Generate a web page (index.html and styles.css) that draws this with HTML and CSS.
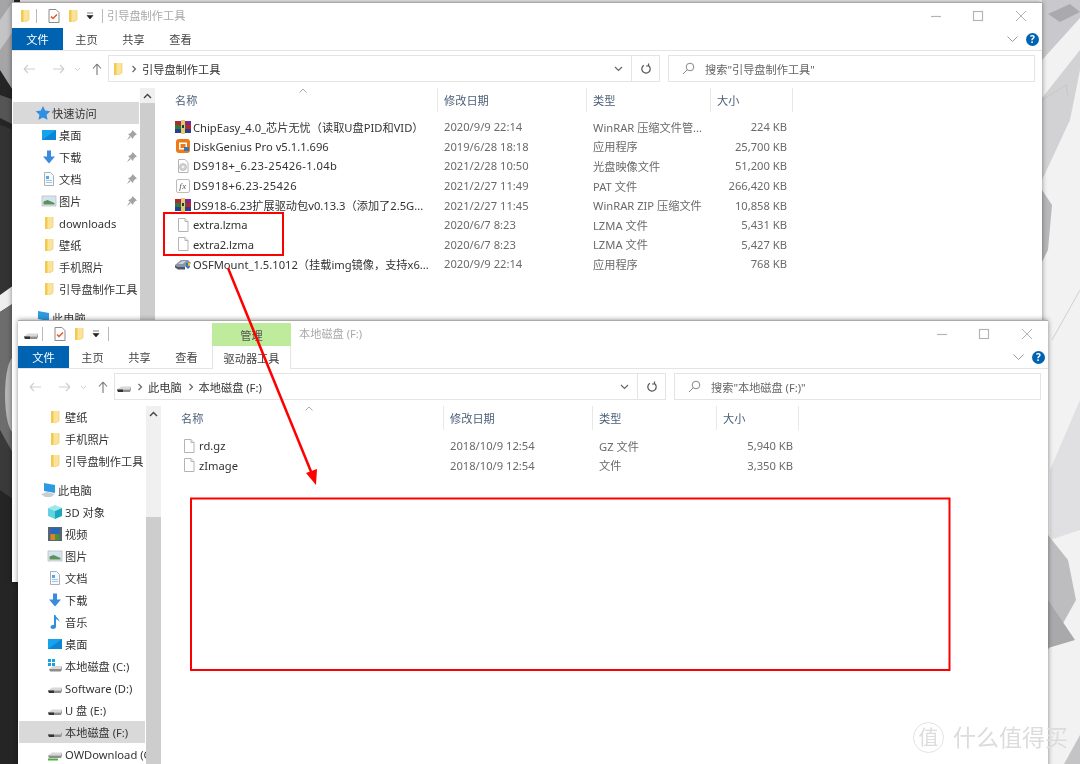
FILE: index.html
```html
<!DOCTYPE html>
<html lang="zh-CN">
<head>
<meta charset="UTF-8">
<meta name="viewport" content="width=device-width, initial-scale=1.0">
<link rel="stylesheet" href="styles.css">
<title>引导盘制作工具</title>
</head>
<body>

<!-- shared icons -->
<svg class="symbols" aria-hidden="true">
  <symbol id="i-folder" viewBox="0 0 16 16"><path d="M4 2h8v10l-4 2H4z" fill="#fbe49a"/><path d="M4 2h2.500v12H4z" fill="#f3c94f"/><path d="M12 2v10l-4 2" fill="none" stroke="#eccb6c" stroke-width=".7"/></symbol>
  <symbol id="i-file" viewBox="0 0 16 16"><path d="M3.500 1.500h6.500l3 3v10h-9.500z" fill="#fff" stroke="#b4b4b4"/><path d="M10 1.500v3h3" fill="#eee" stroke="#b4b4b4"/></symbol>
  <symbol id="i-check" viewBox="0 0 16 16"><path d="M3 1.500h7l3 3v10h-10z" fill="#fdfdfd" stroke="#8c8c8c"/><path d="M5 8.500l2 2 4-4" fill="none" stroke="#e2571e" stroke-width="1.400"/></symbol>
  <symbol id="i-rar" viewBox="0 0 16 16"><rect x="0" y="2" width="16" height="4" fill="#7d2a8c"/><rect x="0" y="6" width="16" height="4" fill="#2d7a3a"/><rect x="0" y="10" width="16" height="4" fill="#27408f"/><rect x="0" y="2" width="5" height="4" fill="#b3272d"/><rect x="11" y="6" width="5" height="4" fill="#b3272d"/><rect x="6" y="1" width="4" height="14" fill="#e8c86a"/><rect x="7" y="6" width="2" height="3" fill="#333"/></symbol>
  <symbol id="i-dg" viewBox="0 0 16 16"><rect x="1" y="1" width="14" height="14" rx="3" fill="#ee7a16"/><path d="M4 4.500h8v7H4z" fill="#fff"/><path d="M5.500 6h5v4h-5z" fill="#ee7a16"/><rect x="9" y="9" width="5" height="4" fill="#2a78c8"/></symbol>
  <symbol id="i-disc" viewBox="0 0 16 16"><path d="M3.500 1.500h6.500l3 3v10h-9.500z" fill="#fff" stroke="#b4b4b4"/><circle cx="8" cy="9" r="3.500" fill="#d4d4d4" stroke="#aaa" stroke-width=".6"/><circle cx="8" cy="9" r="1" fill="#fff"/></symbol>
  <symbol id="i-fx" viewBox="0 0 16 16"><rect x="1.500" y="1.500" width="13" height="13" rx="1.500" fill="#fff" stroke="#bcbcbc"/><text x="8" y="11" text-anchor="middle" class="icon-fx">fx</text></symbol>
  <symbol id="i-osf" viewBox="0 0 16 16"><path d="M0 9l6-5h7l3 3-6 4H3z" fill="#8a96a6"/><path d="M0 9l3 2h7v2.500H3l-3-2z" fill="#4c5666"/><path d="M3 8l4-3h4L8 8z" fill="#c8d0da"/><path d="M11 7h4v4l-2 2-2-2z" fill="#2a78c8"/><path d="M13 7h2v3h-2z" fill="#f0c030"/></symbol>
  <symbol id="i-desktop" viewBox="0 0 16 16"><rect x="1" y="3" width="14" height="10" fill="#17a2ee"/><path d="M1 13l14-10v10z" fill="#0b86d6"/></symbol>
  <symbol id="i-down" viewBox="0 0 16 16"><path d="M6 1.500h4v6h4l-6 7-6-7h4z" fill="#3b8ade"/></symbol>
  <symbol id="i-doc" viewBox="0 0 16 16"><path d="M3.500 1.500h6l3 3v10h-9z" fill="#f6f9fc" stroke="#a9b2bb"/><rect x="5" y="5" width="3" height="3" fill="#57a9e0"/><path d="M5 9.500h6M5 11.500h6" stroke="#a9c4da"/></symbol>
  <symbol id="i-pic" viewBox="0 0 16 16"><rect x="1" y="3" width="14" height="10" fill="#e2e6ea" stroke="#a4abb2" stroke-width=".6"/><rect x="2.500" y="4.500" width="11" height="7" fill="#cfe3f2"/><path d="M2.500 11.500v-3l4-1.500 7 3v1.500z" fill="#5d9257"/></symbol>
  <symbol id="i-star" viewBox="0 0 16 16"><path d="M8 1l2.200 4.600 5 .7-3.600 3.500.9 5L8 12.400l-4.500 2.400.9-5L.8 6.300l5-.7z" fill="#2f8fe0"/></symbol>
  <symbol id="i-pc" viewBox="0 0 16 16"><path d="M3 1l11 2v8L3 9z" fill="#2d9be0"/><path d="M0 12l6-2 8 2-4 3H4z" fill="#c9ced3"/></symbol>
  <symbol id="i-cube" viewBox="0 0 16 16"><path d="M8 1l7 3-7 3-7-3z" fill="#9be8ee"/><path d="M1 4l7 3v8l-7-3z" fill="#62d3de"/><path d="M15 4l-7 3v8l7-3z" fill="#18a9bd"/></symbol>
  <symbol id="i-video" viewBox="0 0 16 16"><rect x="1" y="1" width="14" height="14" fill="#5a6472"/><rect x="3.500" y="2" width="9" height="6" fill="#2b66b8"/><rect x="3.500" y="8" width="4.500" height="6" fill="#d2882a"/><rect x="8" y="8" width="4.500" height="6" fill="#4d8f3a"/></symbol>
  <symbol id="i-music" viewBox="0 0 16 16"><path d="M7 1h1.500c.3 2.500 4 3.500 4 7-.7-1.500-2-2.500-3.500-2.800V12.500C9 14.300 7.500 15 6 15s-2.500-.8-2.500-2 1.300-2.200 3.500-2.200z" fill="#2f8fe0"/></symbol>
  <symbol id="i-drive" viewBox="0 0 16 16"><path d="M1 10.500l4-3h10l-1 3z" fill="#d8d8d8"/><path d="M1 10.500h13l1-3v3l-1 2.500H2z" fill="#8e8e8e"/><path d="M1 10.500h6v2.500H2z" fill="#333"/></symbol>
  <symbol id="i-drive-c" viewBox="0 0 16 16"><path d="M2 11l4-3h9l-1 3z" fill="#d8d8d8"/><path d="M2 11h12l1-3v3l-1 2.500H3z" fill="#8e8e8e"/><path d="M1 1h3v3H1zM5 1h3v3H5zM1 5h3v3H1zM5 5h3v3H5z" fill="#1ba1e2"/></symbol>
  <symbol id="i-drive-net" viewBox="0 0 16 16"><path d="M1 9.500l4-3h10l-1 3z" fill="#d8d8d8"/><path d="M1 9.500h13l1-3v3l-1 2.500H2z" fill="#8e8e8e"/><path d="M1 12.500h10v2H1z" fill="#4faf3d"/></symbol>
</svg>

<!-- desktop wallpaper -->
<svg class="wallpaper" viewBox="0 0 1080 764" aria-hidden="true">
  <rect width="1080" height="764" fill="#f2f2f2"/>
  <rect x="0" y="0" width="20" height="764" fill="#252525"/>
  <polygon points="0,0 14,0 14,92 0,70" fill="#a5a5a8"/>
  <polygon points="0,20 14,0 14,30 0,50" fill="#c4c4c6"/>
  <polygon points="0,95 14,100 14,125 0,118" fill="#555"/>
  <polygon points="0,125 14,130 14,285 0,295" fill="#333"/>
  <polygon points="0,295 14,285 14,303 0,312" fill="#eee"/>
  <polygon points="0,312 14,303 14,470 0,430" fill="#6d6d6d"/>
  <ellipse cx="14" cy="395" rx="9" ry="38" fill="#b5b5b5"/>
  <polygon points="0,430 14,455 14,500 0,490" fill="#3a3a3a"/>
  <polygon points="1042,0 1080,0 1080,18 1042,60" fill="#c9c9cd"/>
  <polygon points="1048,14 1070,4 1080,12 1060,22" fill="#aaaaae"/>
  <polygon points="1042,98 1080,50 1080,70 1070,120 1042,180" fill="#d2d2d5"/>
  <polygon points="1042,190 1052,205 1048,250 1042,262" fill="#b8b8bb"/>
  <polyline points="1042,100 1066,85 1068,96" fill="none" stroke="#c8c8c8"/>
  <polyline points="1052,340 1080,290" fill="none" stroke="#d0d0d0"/>
  <polygon points="1050,470 1080,400 1080,530 1050,540" fill="#e0e0e2"/>
  <polygon points="1048,535 1068,560 1076,600 1048,650" fill="#bdbdc0"/>
  <polygon points="1048,600 1075,640 1048,648" fill="#a9a9ac"/>
  <polygon points="1064,764 1080,735 1080,764" fill="#c4c4c6"/>
</svg>

<!-- back window -->
<section class="win win-back">
  <header class="titlebar">
    <div class="qat">
      <svg class="ico"><use href="#i-folder"/></svg>
      <span class="qat-sep"></span>
      <svg class="ico qat-check"><use href="#i-check"/></svg>
      <svg class="ico qat-folder"><use href="#i-folder"/></svg>
      <svg class="qat-arrow" viewBox="0 0 8 8"><path d="M1 1h6M1 3.500h6L4 7z" fill="#222" stroke="#222" stroke-width=".6"/></svg>
      <span class="qat-sep qat-sep-last"></span>
    </div>
    <span class="win-title">引导盘制作工具</span>
    <svg class="win-btns" viewBox="0 0 100 26"><path d="M0 13.500h10" stroke="#b5b5b5" stroke-width="1.200"/><rect x="42.500" y="8.500" width="9" height="9" fill="none" stroke="#b5b5b5" stroke-width="1.200"/><path d="M85 8l10 10M95 8L85 18" stroke="#b5b5b5"/></svg>
  </header>
  <nav class="tabs">
    <span class="tab tab-file">文件</span>
    <span class="tab">主页</span>
    <span class="tab">共享</span>
    <span class="tab">查看</span>
    <span class="ribbon-end">
      <svg class="ribbon-chev" viewBox="0 0 11 6"><path d="M.5.500l5 5 5-5" fill="none" stroke="#9a9a9a"/></svg>
      <span class="help">?</span>
    </span>
  </nav>
  <div class="addr-row">
    <svg class="nav-arrows" viewBox="0 0 96 27"><path d="M12 14h11M12 14l4-4M12 14l4 4M41 14h11M52 14l-4-4M52 14l-4 4" fill="none" stroke="#cfcfcf" stroke-width="1.200"/><path d="M63 13l2.500 2.500L68 13" fill="none" stroke="#cfcfcf"/><path d="M85 9v11M85 9l-4 4.500M85 9l4 4.500" fill="none" stroke="#777" stroke-width="1.100"/></svg>
    <div class="addr-box">
      <svg class="ico"><use href="#i-folder"/></svg>
      <svg class="crumb-sep" viewBox="0 0 6 8"><path d="M1.500 1l3 3-3 3" fill="none" stroke="#666" stroke-width="1.200"/></svg>
      <span class="crumb">引导盘制作工具</span>
      <svg class="addr-drop" viewBox="0 0 9 6"><path d="M1 1l3.500 3.500L8 1" fill="none" stroke="#666" stroke-width="1.200"/></svg>
      <span class="addr-refresh">
        <svg viewBox="0 0 12 12"><path d="M8.500 2.500A4.200 4.200 0 1 1 4 2.200M8.500 .5v2.500h-2.500" fill="none" stroke="#555" stroke-width="1.200"/></svg>
      </span>
    </div>
    <div class="search-box">
      <svg viewBox="0 0 13 13"><circle cx="8" cy="5" r="3.800" fill="none" stroke="#888"/><path d="M5.200 7.800L1 12" stroke="#888"/></svg>
      <span>搜索"引导盘制作工具"</span>
    </div>
  </div>
  <div class="win-body">
    <aside class="nav-pane">
      <ul class="nav-list nav-list-back">
        <li class="nav-top is-hover"><svg class="ico"><use href="#i-star"/></svg>快速访问</li>
        <li class="nav-item"><svg class="ico"><use href="#i-desktop"/></svg>桌面<svg class="pin" viewBox="0 0 10 10"><path d="M5.500 0L10 4.500 8.500 5 6.500 7 6 9 1 4 3 3.500 5 1.500zM2.500 6L0 10l3.500-2.500z" fill="#a3a3a3"/></svg></li>
        <li class="nav-item"><svg class="ico"><use href="#i-down"/></svg>下载<svg class="pin" viewBox="0 0 10 10"><path d="M5.500 0L10 4.500 8.500 5 6.500 7 6 9 1 4 3 3.500 5 1.500zM2.500 6L0 10l3.500-2.500z" fill="#a3a3a3"/></svg></li>
        <li class="nav-item"><svg class="ico"><use href="#i-doc"/></svg>文档<svg class="pin" viewBox="0 0 10 10"><path d="M5.500 0L10 4.500 8.500 5 6.500 7 6 9 1 4 3 3.500 5 1.500zM2.500 6L0 10l3.500-2.500z" fill="#a3a3a3"/></svg></li>
        <li class="nav-item"><svg class="ico"><use href="#i-pic"/></svg>图片<svg class="pin" viewBox="0 0 10 10"><path d="M5.500 0L10 4.500 8.500 5 6.500 7 6 9 1 4 3 3.500 5 1.500zM2.500 6L0 10l3.500-2.500z" fill="#a3a3a3"/></svg></li>
        <li class="nav-item"><svg class="ico"><use href="#i-folder"/></svg>downloads</li>
        <li class="nav-item"><svg class="ico"><use href="#i-folder"/></svg>壁纸</li>
        <li class="nav-item"><svg class="ico"><use href="#i-folder"/></svg>手机照片</li>
        <li class="nav-item"><svg class="ico"><use href="#i-folder"/></svg>引导盘制作工具</li>
        <li class="nav-top nav-group"><svg class="ico"><use href="#i-pc"/></svg>此电脑</li>
      </ul>
    </aside>
    <div class="scrollbar">
      <span class="sb-up"><svg viewBox="0 0 9 6"><path d="M1 5l3.500-3.500L8 5" fill="none" stroke="#444" stroke-width="1.400"/></svg></span>
      <span class="sb-thumb"></span>
    </div>
    <div class="file-list">
      <div class="file-head">
        <span class="col-name">名称<svg class="sort" viewBox="0 0 8 5"><path d="M.5 4.500L4 1l3.500 3.500" fill="none" stroke="#aaa"/></svg></span>
        <span>修改日期</span><span>类型</span><span>大小</span>
      </div>
      <div class="file-rows">
        <div class="file-row"><span class="col-name"><svg class="ico"><use href="#i-rar"/></svg>ChipEasy_4.0_芯片无忧（读取U盘PID和VID）</span><span>2020/9/9 22:14</span><span>WinRAR 压缩文件管...</span><span class="col-size">224 KB</span></div>
        <div class="file-row"><span class="col-name"><svg class="ico"><use href="#i-dg"/></svg>DiskGenius Pro v5.1.1.696</span><span>2019/6/28 18:18</span><span>应用程序</span><span class="col-size">25,700 KB</span></div>
        <div class="file-row"><span class="col-name name-wide"><svg class="ico"><use href="#i-disc"/></svg>DS918+_6.23-25426-1.04b</span><span>2021/2/28 10:50</span><span>光盘映像文件</span><span class="col-size">51,200 KB</span></div>
        <div class="file-row"><span class="col-name name-wide"><svg class="ico"><use href="#i-fx"/></svg>DS918+6.23-25426</span><span>2021/2/27 11:49</span><span>PAT 文件</span><span class="col-size">266,420 KB</span></div>
        <div class="file-row"><span class="col-name"><svg class="ico"><use href="#i-rar"/></svg>DS918-6.23扩展驱动包v0.13.3（添加了2.5G...</span><span>2021/2/27 11:45</span><span>WinRAR ZIP 压缩文件</span><span class="col-size">10,858 KB</span></div>
        <div class="file-row"><span class="col-name"><svg class="ico"><use href="#i-file"/></svg>extra.lzma</span><span>2020/6/7 8:23</span><span>LZMA 文件</span><span class="col-size">5,431 KB</span></div>
        <div class="file-row"><span class="col-name"><svg class="ico"><use href="#i-file"/></svg>extra2.lzma</span><span>2020/6/7 8:23</span><span>LZMA 文件</span><span class="col-size">5,427 KB</span></div>
        <div class="file-row"><span class="col-name"><svg class="ico"><use href="#i-osf"/></svg>OSFMount_1.5.1012（挂载img镜像，支持x6...</span><span>2020/9/9 22:14</span><span>应用程序</span><span class="col-size">768 KB</span></div>
      </div>
    </div>
  </div>
</section>

<!-- front window -->
<section class="win win-front">
  <header class="titlebar">
    <div class="qat">
      <svg class="ico"><use href="#i-drive"/></svg>
      <span class="qat-sep"></span>
      <svg class="ico qat-check"><use href="#i-check"/></svg>
      <svg class="ico qat-folder"><use href="#i-folder"/></svg>
      <svg class="qat-arrow" viewBox="0 0 8 8"><path d="M1 1h6M1 3.500h6L4 7z" fill="#222" stroke="#222" stroke-width=".6"/></svg>
      <span class="qat-sep qat-sep-last"></span>
    </div>
    <span class="ctx-head">管理</span>
    <span class="win-title win-title-ctx">本地磁盘 (F:)</span>
    <svg class="win-btns" viewBox="0 0 100 26"><path d="M0 13.500h10" stroke="#b5b5b5" stroke-width="1.200"/><rect x="42.500" y="8.500" width="9" height="9" fill="none" stroke="#b5b5b5" stroke-width="1.200"/><path d="M85 8l10 10M95 8L85 18" stroke="#b5b5b5"/></svg>
  </header>
  <nav class="tabs">
    <span class="tab tab-file">文件</span>
    <span class="tab">主页</span>
    <span class="tab">共享</span>
    <span class="tab">查看</span>
    <span class="tab tab-ctx">驱动器工具</span>
    <span class="ribbon-end">
      <svg class="ribbon-chev" viewBox="0 0 11 6"><path d="M.5.500l5 5 5-5" fill="none" stroke="#9a9a9a"/></svg>
      <span class="help">?</span>
    </span>
  </nav>
  <div class="addr-row">
    <svg class="nav-arrows" viewBox="0 0 96 27"><path d="M12 14h11M12 14l4-4M12 14l4 4M41 14h11M52 14l-4-4M52 14l-4 4" fill="none" stroke="#cfcfcf" stroke-width="1.200"/><path d="M63 13l2.500 2.500L68 13" fill="none" stroke="#cfcfcf"/><path d="M85 9v11M85 9l-4 4.500M85 9l4 4.500" fill="none" stroke="#777" stroke-width="1.100"/></svg>
    <div class="addr-box">
      <svg class="ico"><use href="#i-drive"/></svg>
      <svg class="crumb-sep" viewBox="0 0 6 8"><path d="M1.500 1l3 3-3 3" fill="none" stroke="#666" stroke-width="1.200"/></svg>
      <span class="crumb">此电脑</span>
      <svg class="crumb-sep" viewBox="0 0 6 8"><path d="M1.500 1l3 3-3 3" fill="none" stroke="#666" stroke-width="1.200"/></svg>
      <span class="crumb">本地磁盘 (F:)</span>
      <svg class="addr-drop" viewBox="0 0 9 6"><path d="M1 1l3.500 3.500L8 1" fill="none" stroke="#666" stroke-width="1.200"/></svg>
      <span class="addr-refresh">
        <svg viewBox="0 0 12 12"><path d="M8.500 2.500A4.200 4.200 0 1 1 4 2.200M8.500 .5v2.500h-2.500" fill="none" stroke="#555" stroke-width="1.200"/></svg>
      </span>
    </div>
    <div class="search-box">
      <svg viewBox="0 0 13 13"><circle cx="8" cy="5" r="3.800" fill="none" stroke="#888"/><path d="M5.200 7.800L1 12" stroke="#888"/></svg>
      <span>搜索"本地磁盘 (F:)"</span>
    </div>
  </div>
  <div class="win-body">
    <aside class="nav-pane">
      <ul class="nav-list">
        <li class="nav-item"><svg class="ico"><use href="#i-folder"/></svg>壁纸</li>
        <li class="nav-item"><svg class="ico"><use href="#i-folder"/></svg>手机照片</li>
        <li class="nav-item"><svg class="ico"><use href="#i-folder"/></svg>引导盘制作工具</li>
        <li class="nav-top nav-group"><svg class="ico"><use href="#i-pc"/></svg>此电脑</li>
        <li class="nav-item"><svg class="ico"><use href="#i-cube"/></svg>3D 对象</li>
        <li class="nav-item"><svg class="ico"><use href="#i-video"/></svg>视频</li>
        <li class="nav-item"><svg class="ico"><use href="#i-pic"/></svg>图片</li>
        <li class="nav-item"><svg class="ico"><use href="#i-doc"/></svg>文档</li>
        <li class="nav-item"><svg class="ico"><use href="#i-down"/></svg>下载</li>
        <li class="nav-item"><svg class="ico"><use href="#i-music"/></svg>音乐</li>
        <li class="nav-item"><svg class="ico"><use href="#i-desktop"/></svg>桌面</li>
        <li class="nav-item"><svg class="ico"><use href="#i-drive-c"/></svg>本地磁盘 (C:)</li>
        <li class="nav-item"><svg class="ico"><use href="#i-drive"/></svg>Software (D:)</li>
        <li class="nav-item"><svg class="ico"><use href="#i-drive"/></svg>U 盘 (E:)</li>
        <li class="nav-item is-hover"><svg class="ico"><use href="#i-drive"/></svg>本地磁盘 (F:)</li>
        <li class="nav-item"><svg class="ico"><use href="#i-drive-net"/></svg>OWDownload (G:)</li>
      </ul>
    </aside>
    <div class="scrollbar">
      <span class="sb-up"><svg viewBox="0 0 9 6"><path d="M1 5l3.500-3.500L8 5" fill="none" stroke="#444" stroke-width="1.400"/></svg></span>
      <span class="sb-gap"></span>
      <span class="sb-thumb"></span>
    </div>
    <div class="file-list">
      <div class="file-head">
        <span class="col-name">名称<svg class="sort" viewBox="0 0 8 5"><path d="M.5 4.500L4 1l3.500 3.500" fill="none" stroke="#aaa"/></svg></span>
        <span>修改日期</span><span>类型</span><span>大小</span>
      </div>
      <div class="file-rows">
        <div class="file-row"><span class="col-name"><svg class="ico"><use href="#i-file"/></svg>rd.gz</span><span>2018/10/9 12:54</span><span>GZ 文件</span><span class="col-size">5,940 KB</span></div>
        <div class="file-row"><span class="col-name"><svg class="ico"><use href="#i-file"/></svg>zImage</span><span>2018/10/9 12:54</span><span>文件</span><span class="col-size">3,350 KB</span></div>
      </div>
    </div>
  </div>
</section>

<!-- red marks drawn on the screenshot -->
<svg class="marks" viewBox="0 0 1080 764" aria-hidden="true">
  <rect x="164" y="213" width="119" height="42" fill="none" stroke="#f00" stroke-width="2"/>
  <rect x="191" y="498.500" width="758.500" height="171.500" fill="none" stroke="#f00" stroke-width="2"/>
  <path d="M228 268L312 474" stroke="#f00" stroke-width="2.500"/>
  <polygon points="316,485 306,473 317,469" fill="#f00"/>
</svg>

<div class="watermark">
  <span class="wm-badge">值</span>
  <span class="wm-text">什么值得买</span>
</div>

</body>
</html>
```

FILE: styles.css
```css
* {
    box-sizing: border-box;
}

body {
    margin: 0;
    width: 1080px;
    height: 764px;
    overflow: hidden;
    position: relative;
    background: #f2f2f2;
    color: #333;
    font-family: "Noto Sans", "Noto Sans CJK SC", sans-serif;
    font-size: 11.2px;
}

.symbols {
    display: none;
}

.icon-fx {
    font-family: "Liberation Serif", serif;
    font-style: italic;
    font-size: 9px;
    fill: #555;
}

.wallpaper,
.marks {
    position: absolute;
    left: 0;
    top: 0;
    width: 1080px;
    height: 764px;
}

.marks {
    pointer-events: none;
}

/* the screenshot is a little soft */
.wallpaper,
.win,
.marks,
.watermark {
    filter: blur(0.35px);
}

.ico {
    width: 16px;
    height: 16px;
    flex: none;
}

/* windows */
.win {
    position: absolute;
    width: 1030px;
    display: flex;
    flex-direction: column;
    background: #fff;
    border-top: 1px solid #aaa;
    box-shadow: 0 0 5px rgba(0, 0, 0, 0.45);
}

.win-back {
    left: 12px;
    top: 2px;
    height: 580px;
}

.win-front {
    left: 18px;
    top: 320px;
    height: 460px;
}

.titlebar {
    height: 25px;
    display: flex;
    align-items: center;
    flex: none;
}

.qat {
    display: flex;
    align-items: center;
    padding-left: 5px;
}

.qat-sep {
    width: 1px;
    height: 14px;
    background: #b9b9b9;
    margin-left: 3px;
}

.qat-check {
    margin-left: 9px;
}

.qat-folder {
    margin-left: 3px;
}

.qat-arrow {
    width: 8px;
    height: 8px;
    margin-left: 5px;
}

.qat-sep-last {
    margin-left: 8px;
}

.win-title {
    color: #a9a9a9;
    margin-left: 4px;
    margin-top: -2px;
}

.win-title-ctx {
    margin-left: 8px;
}

.ctx-head {
    align-self: flex-end;
    width: 79px;
    height: 23px;
    margin-left: 103px;
    background: #bfeb9d;
    color: #555;
    display: flex;
    align-items: center;
    justify-content: center;
}

.win-btns {
    width: 100px;
    height: 26px;
    margin-left: auto;
    margin-right: 11px;
}

.tabs {
    height: 23px;
    flex: none;
    display: flex;
    align-items: stretch;
    border-bottom: 1px solid #e4e4e4;
}

.tab {
    width: 47px;
    display: flex;
    align-items: center;
    justify-content: center;
    color: #444;
}

.tab-file {
    width: 51px;
    background: #0063b1;
    color: #fff;
}

.tab-ctx {
    width: 79px;
    margin-left: 2px;
    border-left: 1px solid #e4e4e4;
    border-right: 1px solid #e4e4e4;
    margin-bottom: -1px;
    background: #fff;
}

.ribbon-end {
    margin-left: auto;
    display: flex;
    align-items: center;
    padding-right: 3px;
}

.ribbon-chev {
    width: 11px;
    height: 6px;
    margin-right: 8px;
}

.help {
    width: 13px;
    height: 13px;
    border-radius: 50%;
    background: #0063b1;
    color: #fff;
    font-weight: 700;
    font-size: 10px;
    line-height: 13px;
    text-align: center;
}

/* address row */
.addr-row {
    height: 27px;
    margin-top: 4px;
    flex: none;
    display: flex;
    padding-right: 7px;
}

.nav-arrows {
    width: 96px;
    height: 27px;
    flex: none;
}

.addr-box {
    width: 552px;
    border: 1px solid #e4e4e4;
    display: flex;
    align-items: center;
    padding-left: 1px;
    color: #333;
}

.crumb-sep {
    width: 6px;
    height: 8px;
    margin: 0 5px 0 5px;
    flex: none;
}

.crumb + .crumb-sep {
    margin-left: 6px;
}

.addr-drop {
    width: 9px;
    height: 6px;
    margin-left: auto;
    margin-right: 8px;
}

.addr-refresh {
    width: 28px;
    height: 100%;
    border-left: 1px solid #e4e4e4;
    display: flex;
    align-items: center;
    justify-content: center;
}

.addr-refresh svg {
    width: 12px;
    height: 12px;
}

.search-box {
    flex: 1;
    margin-left: 8px;
    border: 1px solid #e4e4e4;
    display: flex;
    align-items: center;
    gap: 10px;
    padding-left: 13px;
    color: #666;
}

.search-box svg {
    width: 13px;
    height: 13px;
}

/* main area */
.win-body {
    flex: 1;
    min-height: 0;
    margin-top: 6px;
    display: flex;
}

.nav-pane {
    width: 128px;
    flex: none;
    overflow: hidden;
}

.nav-list {
    list-style: none;
    margin: 0;
    padding: 0;
}

.nav-list-back {
    padding-top: 14px;
}

.nav-top,
.nav-item {
    height: 22px;
    display: flex;
    align-items: center;
    white-space: nowrap;
    color: #333;
}

.nav-top {
    padding-left: 23px;
    gap: 1px;
}

.nav-item {
    padding-left: 29px;
    gap: 2px;
}

.nav-group {
    margin-top: 7px;
}

.is-hover {
    background: #d9d9d9;
    margin-left: 1px;
    margin-right: 1px;
}

.is-hover.nav-top {
    padding-left: 22px;
}

.is-hover.nav-item {
    padding-left: 28px;
}

.pin {
    width: 10px;
    height: 10px;
    position: absolute;
    left: 115px;
}

.scrollbar {
    width: 15px;
    flex: none;
    display: flex;
    flex-direction: column;
    background: #f0f0f0;
}

.sb-up {
    height: 15px;
    flex: none;
    display: flex;
    align-items: center;
    justify-content: center;
}

.sb-up svg {
    width: 9px;
    height: 6px;
}

.sb-gap {
    height: 96px;
    flex: none;
}

.sb-thumb {
    flex: 1;
    background: #cdcdcd;
}

/* file list */
.file-list {
    flex: 1;
    min-width: 0;
}

.file-head,
.file-row {
    display: grid;
    grid-template-columns: 283px 149px 124px 82px;
}

.file-head {
    height: 24px;
    color: #4c607a;
}

.file-head > span {
    display: flex;
    align-items: center;
    padding-left: 6px;
    border-right: 1px solid #e8e8e8;
    position: relative;
}

.file-head > .col-name {
    padding-left: 20px;
}

.sort {
    width: 8px;
    height: 5px;
    position: absolute;
    left: 144px;
    top: 0;
}

.file-rows {
    padding-top: 5px;
}

.win-front .file-rows {
    padding-top: 6px;
}

.file-row {
    height: 19.6px;
    align-items: center;
    color: #6a6a6a;
    white-space: nowrap;
}

.file-row > span {
    padding-left: 6px;
}

.file-row > .col-name {
    padding-left: 20px;
    display: flex;
    align-items: center;
    gap: 2px;
    color: #333;
}

.file-row > .name-wide {
    letter-spacing: 0.39px;
}

.file-row > .col-size {
    text-align: right;
    padding: 0 6px 0 0;
}

/* watermark */
.watermark {
    position: absolute;
    left: 913px;
    top: 722px;
    display: flex;
    align-items: center;
    gap: 9px;
    color: #dcdcdc;
}

.wm-badge {
    width: 31px;
    height: 31px;
    border-radius: 50%;
    border: 1px solid #e2e2e2;
    font-size: 20px;
    line-height: 29px;
    text-align: center;
}

.wm-text {
    font-size: 23px;
    line-height: 31px;
}
```
